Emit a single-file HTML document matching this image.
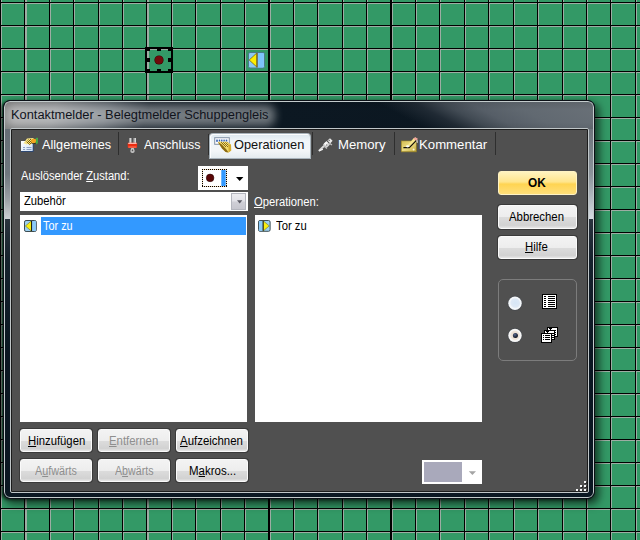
<!DOCTYPE html>
<html lang="de">
<head>
<meta charset="utf-8">
<title>Kontaktmelder - Belegtmelder Schuppengleis</title>
<style>
html,body{margin:0;padding:0;}
body{width:640px;height:540px;overflow:hidden;position:relative;background:#339966;font-family:"Liberation Sans",sans-serif;}
.grid{position:absolute;left:0;top:0;display:block;}
.abs{position:absolute;}
.tx{position:absolute;white-space:nowrap;line-height:1;transform-origin:0 50%;font-family:"Liberation Sans",sans-serif;}
.tx u{text-decoration:underline;text-underline-offset:1px;text-decoration-thickness:1px;}
/* selection cell */
#sel{left:145px;top:47px;width:24px;height:22px;border:2px solid #000;}
.h{position:absolute;background:#000;}
#dot{left:154.8px;top:55.8px;width:8.4px;height:8.4px;border-radius:50%;background:#6e0b0b;box-shadow:0 0 0 0.6px #300;}
/* dialog */
#dlg{left:3px;top:100px;width:592px;height:399px;border-radius:7px;box-sizing:border-box;border:1px solid #0b1016;
 box-shadow:3px 4px 8px 1px rgba(0,0,0,.62), -2px 1px 3px rgba(0,0,0,.55);background:#0b1722;overflow:hidden;}
#dlgin{left:0;top:0;right:0;bottom:0;border-radius:6px;border:1px solid #c3cbcc;box-sizing:border-box;}
#tbar{left:1px;top:1px;width:588px;height:27px;overflow:hidden;
 background:
  linear-gradient(to bottom, rgba(0,0,0,.10) 0%, rgba(0,0,0,0) 30%, rgba(0,0,0,0) 75%, rgba(0,0,0,.06) 100%),
  linear-gradient(28deg, rgba(12,24,34,0) 198px, #202a34 215px, #414a53 228px, #565e67 241px, #616971 260px, #6a7178 300px),
  linear-gradient(105deg,#8a8a8a 0px,#84878a 50px,#555d65 100px,#1c2630 140px,#0c1822 260px,#0b1620 100%);}
#glow{left:10px;top:11px;width:252px;height:5px;border-radius:6px;background:rgba(255,255,255,.40);box-shadow:0 0 8px 8px rgba(255,255,255,.40);}
#lstrip{left:1px;top:28px;width:5px;height:365px;background:linear-gradient(to bottom,#666e76 0px,#6f777e 45px,#9a9fa4 70px,#cdd0d3 90px,#2a343e 90px,#16222d 130px,#0b1722 220px,#0b1722 100%);}
#rstrip{left:585px;top:28px;width:5px;height:365px;background:linear-gradient(to bottom,#6c747b 0px,#8b939a 45px,#b4bbc2 70px,#d6dce2 90px,#2a343e 90px,#16222d 130px,#0b1722 220px,#0b1722 100%);}
#cli{left:6px;top:27px;width:579px;height:365px;border-radius:2px;border:1px solid #c0c6c8;box-sizing:border-box;background:#505050;}
#cli2{left:0;top:0;right:0;bottom:0;border-radius:1px;border:1px solid #1c1c1c;box-sizing:border-box;}
/* tabs */
.sep{position:absolute;width:1px;top:132px;height:23px;background:#2e2e2e;}
#tabsel{left:210px;top:134px;width:100px;height:23.5px;border-radius:3px 3px 0 0;background:linear-gradient(to bottom,#dbe7ef 0%,#f1f6f9 30%,#f3f6f8 70%,#e4ebef 100%);box-shadow:0 0 0 1px rgba(190,204,214,.8), inset 1px 1px 0 rgba(255,255,255,.9);}
/* inputs */
.white{position:absolute;background:#fff;}
.btn{position:absolute;box-sizing:border-box;border:1px solid #fafafa;border-radius:3px;background:linear-gradient(to bottom,#f3f3f3 0%,#ededed 50%,#dcdcdc 52%,#d2d2d2 88%,#e6e6e6 100%);box-shadow:0 0 0 1px rgba(40,40,40,.55);}
.btn.ok{border-color:#fff3c4;background:linear-gradient(to bottom,#fff3bf 0%,#ffe58c 45%,#ffd452 55%,#ffdf7a 100%);box-shadow:none;}
.bt{position:absolute;left:0;right:0;text-align:center;white-space:nowrap;line-height:1;color:#000;font-size:11.8px;}
.bt.dis{color:#8a8a8a;}
.bt u{text-underline-offset:1px;text-decoration-thickness:1px;}

</style>
</head>
<body>
<svg class="grid" width="640" height="540" viewBox="0 0 640 540" shape-rendering="crispEdges">
<rect width="640" height="540" fill="#339966"/>
<rect x="0" y="3" width="640" height="1" fill="#9dada3"/>
<rect x="0" y="26" width="640" height="1" fill="#9dada3"/>
<rect x="0" y="49" width="640" height="1" fill="#9dada3"/>
<rect x="0" y="72" width="640" height="1" fill="#9dada3"/>
<rect x="0" y="95" width="640" height="1" fill="#9dada3"/>
<rect x="0" y="118" width="640" height="1" fill="#9dada3"/>
<rect x="0" y="141" width="640" height="1" fill="#9dada3"/>
<rect x="0" y="164" width="640" height="1" fill="#9dada3"/>
<rect x="0" y="187" width="640" height="1" fill="#9dada3"/>
<rect x="0" y="210" width="640" height="1" fill="#9dada3"/>
<rect x="0" y="233" width="640" height="1" fill="#9dada3"/>
<rect x="0" y="256" width="640" height="1" fill="#9dada3"/>
<rect x="0" y="279" width="640" height="1" fill="#9dada3"/>
<rect x="0" y="302" width="640" height="1" fill="#9dada3"/>
<rect x="0" y="325" width="640" height="1" fill="#9dada3"/>
<rect x="0" y="348" width="640" height="1" fill="#9dada3"/>
<rect x="0" y="371" width="640" height="1" fill="#9dada3"/>
<rect x="0" y="394" width="640" height="1" fill="#9dada3"/>
<rect x="0" y="417" width="640" height="1" fill="#9dada3"/>
<rect x="0" y="440" width="640" height="1" fill="#9dada3"/>
<rect x="0" y="463" width="640" height="1" fill="#9dada3"/>
<rect x="0" y="486" width="640" height="1" fill="#9dada3"/>
<rect x="0" y="509" width="640" height="1" fill="#9dada3"/>
<rect x="0" y="532" width="640" height="1" fill="#9dada3"/>
<rect x="1" y="0" width="1" height="540" fill="#9dada3"/>
<rect x="25" y="0" width="2" height="540" fill="#9dada3"/>
<rect x="50" y="0" width="1" height="540" fill="#9dada3"/>
<rect x="74" y="0" width="1" height="540" fill="#9dada3"/>
<rect x="99" y="0" width="1" height="540" fill="#9dada3"/>
<rect x="123" y="0" width="1" height="540" fill="#9dada3"/>
<rect x="147" y="0" width="2" height="540" fill="#9dada3"/>
<rect x="172" y="0" width="1" height="540" fill="#9dada3"/>
<rect x="196" y="0" width="1" height="540" fill="#9dada3"/>
<rect x="221" y="0" width="1" height="540" fill="#9dada3"/>
<rect x="245" y="0" width="1" height="540" fill="#9dada3"/>
<rect x="270" y="0" width="1" height="540" fill="#9dada3"/>
<rect x="294" y="0" width="1" height="540" fill="#9dada3"/>
<rect x="318" y="0" width="1" height="540" fill="#9dada3"/>
<rect x="343" y="0" width="1" height="540" fill="#9dada3"/>
<rect x="367" y="0" width="1" height="540" fill="#9dada3"/>
<rect x="392" y="0" width="1" height="540" fill="#9dada3"/>
<rect x="416" y="0" width="1" height="540" fill="#9dada3"/>
<rect x="440" y="0" width="1" height="540" fill="#9dada3"/>
<rect x="465" y="0" width="1" height="540" fill="#9dada3"/>
<rect x="489" y="0" width="1" height="540" fill="#9dada3"/>
<rect x="514" y="0" width="1" height="540" fill="#9dada3"/>
<rect x="538" y="0" width="1" height="540" fill="#9dada3"/>
<rect x="563" y="0" width="1" height="540" fill="#9dada3"/>
<rect x="587" y="0" width="1" height="540" fill="#9dada3"/>
<rect x="611" y="0" width="1" height="540" fill="#9dada3"/>
<rect x="636" y="0" width="1" height="540" fill="#9dada3"/>
<rect x="660" y="0" width="1" height="540" fill="#9dada3"/>
<rect x="0" y="2" width="640" height="1" fill="#000"/>
<rect x="0" y="25" width="640" height="1" fill="#000"/>
<rect x="0" y="48" width="640" height="1" fill="#000"/>
<rect x="0" y="71" width="640" height="1" fill="#000"/>
<rect x="0" y="94" width="640" height="1" fill="#000"/>
<rect x="0" y="117" width="640" height="1" fill="#000"/>
<rect x="0" y="140" width="640" height="1" fill="#000"/>
<rect x="0" y="163" width="640" height="1" fill="#000"/>
<rect x="0" y="186" width="640" height="1" fill="#000"/>
<rect x="0" y="209" width="640" height="1" fill="#000"/>
<rect x="0" y="232" width="640" height="1" fill="#000"/>
<rect x="0" y="255" width="640" height="1" fill="#000"/>
<rect x="0" y="278" width="640" height="1" fill="#000"/>
<rect x="0" y="301" width="640" height="1" fill="#000"/>
<rect x="0" y="324" width="640" height="1" fill="#000"/>
<rect x="0" y="347" width="640" height="1" fill="#000"/>
<rect x="0" y="370" width="640" height="1" fill="#000"/>
<rect x="0" y="393" width="640" height="1" fill="#000"/>
<rect x="0" y="416" width="640" height="1" fill="#000"/>
<rect x="0" y="439" width="640" height="1" fill="#000"/>
<rect x="0" y="462" width="640" height="1" fill="#000"/>
<rect x="0" y="485" width="640" height="1" fill="#000"/>
<rect x="0" y="508" width="640" height="1" fill="#000"/>
<rect x="0" y="531" width="640" height="1" fill="#000"/>
<rect x="0" y="0" width="1" height="540" fill="#000"/>
<rect x="24" y="0" width="1" height="540" fill="#000"/>
<rect x="49" y="0" width="1" height="540" fill="#000"/>
<rect x="73" y="0" width="1" height="540" fill="#000"/>
<rect x="98" y="0" width="1" height="540" fill="#000"/>
<rect x="122" y="0" width="1" height="540" fill="#000"/>
<rect x="146" y="0" width="1" height="540" fill="#000"/>
<rect x="171" y="0" width="1" height="540" fill="#000"/>
<rect x="195" y="0" width="1" height="540" fill="#000"/>
<rect x="220" y="0" width="1" height="540" fill="#000"/>
<rect x="244" y="0" width="1" height="540" fill="#000"/>
<rect x="268" y="0" width="2" height="540" fill="#000"/>
<rect x="293" y="0" width="1" height="540" fill="#000"/>
<rect x="317" y="0" width="1" height="540" fill="#000"/>
<rect x="342" y="0" width="1" height="540" fill="#000"/>
<rect x="366" y="0" width="1" height="540" fill="#000"/>
<rect x="390" y="0" width="2" height="540" fill="#000"/>
<rect x="415" y="0" width="1" height="540" fill="#000"/>
<rect x="439" y="0" width="1" height="540" fill="#000"/>
<rect x="464" y="0" width="1" height="540" fill="#000"/>
<rect x="488" y="0" width="1" height="540" fill="#000"/>
<rect x="513" y="0" width="1" height="540" fill="#000"/>
<rect x="537" y="0" width="1" height="540" fill="#000"/>
<rect x="562" y="0" width="1" height="540" fill="#000"/>
<rect x="586" y="0" width="1" height="540" fill="#000"/>
<rect x="610" y="0" width="1" height="540" fill="#000"/>
<rect x="635" y="0" width="1" height="540" fill="#000"/>
<rect x="659" y="0" width="1" height="540" fill="#000"/>
</svg>
<!-- grid objects -->
<div id="sel" class="abs"></div>
<div class="h" style="left:147px;top:49px;width:3px;height:2px"></div>
<div class="h" style="left:157px;top:49px;width:4px;height:2px"></div>
<div class="h" style="left:168px;top:49px;width:3px;height:2px"></div>
<div class="h" style="left:147px;top:58px;width:3px;height:4px"></div>
<div class="h" style="left:168px;top:58px;width:3px;height:4px"></div>
<div class="h" style="left:147px;top:69px;width:3px;height:2px"></div>
<div class="h" style="left:157px;top:69px;width:4px;height:2px"></div>
<div class="h" style="left:168px;top:69px;width:3px;height:2px"></div>
<div id="dot" class="abs"></div>
<svg class="abs" style="left:248px;top:52px" width="17" height="17" viewBox="0 0 17 17">
 <rect x="0.5" y="0.5" width="16" height="15.5" rx="1.5" fill="#8cc8f4" stroke="#4a7a8a" stroke-width="1"/>
 <rect x="9.5" y="1" width="6" height="14.5" fill="#7cc4fc"/>
 <path d="M1.2 8 L8.8 1 L8.8 15 Z" fill="#ffee00" stroke="#7a6a10" stroke-width="0.8"/>
 <rect x="8.6" y="1" width="1" height="14.5" fill="#6a5a20"/>
</svg>

<!-- dialog -->
<div id="dlg" class="abs">
 <div id="tbar" class="abs"><div id="glow" class="abs"></div></div>
 <div id="lstrip" class="abs"></div>
 <div id="rstrip" class="abs"></div>
 <div id="dlgin" class="abs"></div>
 <div id="cli" class="abs"><div id="cli2" class="abs"></div></div>
</div>

<!-- tabs -->
<div class="sep" style="left:118px"></div>
<div class="sep" style="left:208px;top:134px;height:21px"></div>
<div id="tabsel" class="abs"></div>
<div class="sep" style="left:312px"></div>
<div class="sep" style="left:394px"></div>
<div class="sep" style="left:495px"></div>

<!-- state dropdown -->
<div class="white" style="left:198px;top:166px;width:50px;height:23.8px"></div>
<!-- combo -->
<div class="white" style="left:20.4px;top:191.7px;width:227.5px;height:19.3px"></div>
<!-- lists -->
<div class="white" style="left:20.4px;top:215.4px;width:227px;height:206.8px"></div>
<div class="white" style="left:254.5px;top:215.4px;width:227px;height:206.8px"></div>
<div class="abs" style="left:41px;top:217px;width:205px;height:18px;background:#3399ff"></div>

<!-- buttons -->
<div class="btn ok" style="left:498px;top:171px;width:79px;height:24px"></div>
<div class="btn" style="left:498px;top:205px;width:79px;height:23.5px"></div>
<div class="btn" style="left:498px;top:236.2px;width:79px;height:23.3px"></div>

<div class="btn" style="left:20.3px;top:429px;width:71.6px;height:23.3px"></div>
<div class="btn" style="left:98.3px;top:429px;width:71.6px;height:23.3px"></div>
<div class="btn" style="left:176.3px;top:429px;width:71.6px;height:23.3px"></div>
<div class="btn" style="left:20.3px;top:459px;width:71.6px;height:23.3px"></div>
<div class="btn" style="left:98.3px;top:459px;width:71.6px;height:23.3px"></div>
<div class="btn" style="left:176.3px;top:459px;width:71.6px;height:23.3px"></div>

<!-- group box -->
<div class="abs" style="left:498px;top:279px;width:79px;height:82px;box-sizing:border-box;border:1px solid #7c7c7c;border-radius:5px"></div>

<!-- color combo -->
<div class="white" style="left:422px;top:460px;width:60px;height:24px"></div>
<div class="abs" style="left:424px;top:462px;width:38px;height:20px;background:#a9a9bb"></div>

<!-- tab icon 1: Allgemeines -->
<svg class="abs" style="left:20px;top:137px" width="19" height="16" viewBox="0 0 19 16">
 <defs><linearGradient id="g1" x1="0" y1="0" x2="1" y2="1"><stop offset="0" stop-color="#ffffff"/><stop offset="1" stop-color="#cfe0f6"/></linearGradient>
 <pattern id="chk" width="2" height="2" patternUnits="userSpaceOnUse"><rect width="2" height="2" fill="#f8e680"/><rect width="1" height="1" fill="#7a5c0c"/><rect x="1" y="1" width="1" height="1" fill="#7a5c0c"/></pattern></defs>
 <rect x="1" y="4" width="12.6" height="10.8" fill="#27477c"/>
 <rect x="1" y="4" width="11.7" height="10" fill="url(#g1)"/>
 <rect x="3" y="10" width="2" height="1" fill="#8da0c4"/><rect x="6.5" y="10" width="5" height="1" fill="#8da0c4"/>
 <rect x="3" y="12" width="2" height="1" fill="#8da0c4"/><rect x="6.5" y="12" width="5" height="1" fill="#8da0c4"/>
 <path d="M3.4 6.4 L7 1.6 L13 1 L15 3 L13.4 6.4 L11.4 6.4 L10 8.4 L8 6.8 L6.4 7.6 L5 6.4 Z" fill="#f4e184"/>
 <path d="M6 5 L9 2 L13 2 L13 6 L11 6.4 L10 8 L8 6.4 Z" fill="url(#chk)"/>
 <ellipse cx="13.8" cy="3.9" rx="2.7" ry="2.2" fill="#f2a41e"/>
 <path d="M11.2 5.8 Q13.8 7.2 16 5.6 L15.6 6.6 Q13.6 7.6 11.6 6.6 Z" fill="#2e2006"/>
 <path d="M15.6 1 L18 0.8 L18 6 L16.6 7.4 L15.6 5.8 Q17 3.6 15.6 1 Z" fill="#47a847"/>
</svg>
<!-- tab icon 2: Anschluss -->
<svg class="abs" style="left:126px;top:137px" width="13" height="17" viewBox="0 0 13 17">
 <rect x="3.2" y="1" width="2.2" height="5" fill="#e6e6e6"/><rect x="3.2" y="1" width="1" height="5" fill="#9a9a9a"/>
 <rect x="7.7" y="1" width="2.2" height="5" fill="#e6e6e6"/><rect x="7.7" y="1" width="1" height="5" fill="#9a9a9a"/>
 <rect x="1.7" y="5.7" width="9.4" height="5.2" rx="0.8" fill="#ee2c10"/>
 <rect x="2.2" y="5.8" width="8.4" height="1" fill="#ffd8d0"/>
 <rect x="2.4" y="9.6" width="8" height="0.9" fill="#ff9a88" opacity=".85"/>
 <path d="M5.3 11 L7.7 11 L8.7 14 Q8.6 16 6.5 16 Q4.4 16 4.3 14 Z" fill="#c8c8c8"/>
 <path d="M6 12.4 L7 12.4 L7.4 14.2 L5.6 14.2 Z" fill="#585858"/>
</svg>
<!-- tab icon 3: Operationen -->
<svg class="abs" style="left:213px;top:136px" width="19" height="17" viewBox="0 0 19 17">
 <defs><pattern id="chk3" width="2" height="2" patternUnits="userSpaceOnUse"><rect width="2" height="2" fill="#f6e27a"/><rect width="1" height="1" fill="#8a6a14"/><rect x="1" y="1" width="1" height="1" fill="#8a6a14"/></pattern></defs>
 <rect x="1.7" y="1.7" width="14.6" height="6.6" fill="#fdfdff" stroke="#8292a6" stroke-width="1"/>
 <g fill="#2c5cb0"><rect x="3.2" y="3.6" width="1.6" height="2.2"/><rect x="5.8" y="3.6" width="1.4" height="2"/><rect x="8.1" y="3.6" width="1.4" height="2"/><rect x="10.4" y="3.6" width="1.4" height="2"/><rect x="12.7" y="3.6" width="1.6" height="2"/></g>
 <path d="M4.8 6 L7.6 5.4 L10 6 L12.4 5.4 L15 6.2 L18 8.6 L18.2 14.6 L15.6 16.4 L12.6 16 L9 12.4 Z" fill="#f0d868"/>
 <path d="M7 6 L15 6.4 L16 11 L12 11 Z" fill="url(#chk3)"/>
 <path d="M4.8 6 L9 12.4 L12.6 16 L15.6 16.4 L13.4 13.6 L8.8 8.6 Z" fill="#8a6a14"/>
 <path d="M15.4 8.4 L18 8.6 L18.2 14.6 L15.6 16.4 Z" fill="#d4ab30"/>
</svg>
<!-- tab icon 4: Memory -->
<svg class="abs" style="left:318px;top:137px" width="16" height="15" viewBox="0 0 16 15">
 <path d="M1.4 13.4 L6 9" stroke="#d8d8d8" stroke-width="2" stroke-linecap="round"/>
 <path d="M1.6 13.6 L4.4 12.4" stroke="#f4f4f4" stroke-width="1.4" stroke-linecap="round"/>
 <path d="M5 7.4 L8.4 4 L12 7.6 L8.6 11 Z" fill="#d4d4d4"/>
 <path d="M6 6.6 L8.4 4.4 L10 6 L7.6 8.4 Z" fill="#f8f8f8"/>
 <path d="M9.4 3.6 L12 1.2 L14.6 3.8 L12.2 6.4 Z" fill="#e9e9e9"/>
 <path d="M11.4 6.2 L14 8" stroke="#c4c4c4" stroke-width="1.2"/>
 <path d="M6.6 9.8 L9 11.6" stroke="#bcbcbc" stroke-width="1.1"/>
 <rect x="10.6" y="2.8" width="1.2" height="1.2" fill="#707070"/><rect x="8" y="7.4" width="1.2" height="1.2" fill="#8a8a8a"/>
</svg>
<!-- tab icon 5: Kommentar -->
<svg class="abs" style="left:400px;top:137px" width="18" height="17" viewBox="0 0 18 17">
 <defs><linearGradient id="g5" x1="0" y1="0" x2="1" y2="1"><stop offset="0" stop-color="#d4be54"/><stop offset=".5" stop-color="#ecdc84"/><stop offset="1" stop-color="#c4ac40"/></linearGradient></defs>
 <rect x="1" y="3.6" width="15.8" height="11.6" fill="#94802a"/>
 <rect x="1.7" y="4.2" width="14.2" height="10.1" fill="url(#g5)"/>
 <path d="M6.6 9.4 L13.6 1.2 L15.4 0.4 L17.3 1.8 L16.6 3.8 L9.4 11 L6.8 11 Z" fill="#f6e68c"/>
 <path d="M13.4 1.4 L15.2 0.2 L17.6 1.4 L17.2 3.4 L16.2 4.2 Z" fill="#f0a49c"/>
 <path d="M3.4 10.7 L9.3 10.7 L16.4 3.4" stroke="#120e06" stroke-width="1.2" fill="none"/>
 <ellipse cx="7.6" cy="9.3" rx="1.7" ry="1.1" fill="#fcfcf6"/>
 <circle cx="13.6" cy="12.6" r="1" fill="#fbf6e0"/>
 <path d="M17 3.2 L17.2 5.8" stroke="#fff" stroke-width="1"/>
</svg>

<!-- state dropdown content -->
<svg class="abs" style="left:198px;top:166px" width="50" height="24" viewBox="0 0 50 24">
 <rect x="4" y="3" width="25" height="18" fill="#f6dcb8"/><rect x="5" y="4" width="23" height="16" fill="#fff"/>
 <g shape-rendering="crispEdges" stroke="#000" stroke-width="1" stroke-dasharray="1 1" fill="none"><path d="M4 3.5 H29"/><path d="M4 20.5 H29"/><path d="M4.5 3 V21"/><path d="M28.5 3 V21"/></g>
 <rect x="23.3" y="4" width="4.4" height="16" fill="#3399ff"/>
 <circle cx="12.1" cy="11.9" r="3.8" fill="#5a0606" stroke="#2a0303" stroke-width=".6"/>
 <path d="M38 11 L45.4 11 L41.7 15 Z" fill="#000"/>
</svg>
<!-- combo dropdown button -->
<div class="abs" style="left:231px;top:193px;width:15px;height:17px;box-sizing:border-box;border:1px solid #b4b6be;background:linear-gradient(to bottom,#ececf0 0%,#e2e2e8 45%,#cfcfd6 55%,#c6c6ce 100%)"></div>
<svg class="abs" style="left:236px;top:199px" width="8" height="6" viewBox="0 0 8 6"><path d="M1 1.2 L6.4 1.2 L3.7 4.4 Z" fill="#5c5c66"/></svg>
<!-- list icon left -->
<svg class="abs" style="left:24.2px;top:220px" width="12.8" height="12" viewBox="0 0 13 12" preserveAspectRatio="none">
 <rect x="0.5" y="0.5" width="12" height="11" rx="1.6" fill="#9dd0f0" stroke="#3a4a50" stroke-width="1"/>
 <rect x="8" y="1" width="4" height="10" fill="#8ccaf8"/>
 <path d="M1.4 6 L7.6 0.8 L7.6 11.2 Z" fill="#f8ee10" stroke="#5a5a20" stroke-width=".5"/>
 <rect x="7.2" y="1" width="1" height="10" fill="#1a1a10"/>
</svg>
<!-- list icon right -->
<svg class="abs" style="left:258.3px;top:220px" width="12.6" height="11.8" viewBox="0 0 13 12" preserveAspectRatio="none">
 <rect x="0.5" y="0.5" width="12" height="11" rx="1.6" fill="#9dd0f0" stroke="#3a4a50" stroke-width="1"/>
 <rect x="1" y="1" width="4" height="10" fill="#8ccaf8"/>
 <path d="M11.6 6 L5.4 0.8 L5.4 11.2 Z" fill="#f8ee10" stroke="#5a5a20" stroke-width=".5"/>
 <rect x="4.8" y="1" width="1" height="10" fill="#1a1a10"/>
</svg>
<!-- radios -->
<svg class="abs" style="left:506px;top:294px" width="18" height="18" viewBox="0 0 18 18">
 <defs><radialGradient id="r1" cx=".55" cy=".45" r=".6"><stop offset="0" stop-color="#d6e6f6"/><stop offset=".7" stop-color="#dfe9f5"/><stop offset="1" stop-color="#f6f9fc"/></radialGradient></defs>
 <circle cx="9" cy="9.3" r="7.5" fill="#3f464c" opacity=".55"/>
 <circle cx="9" cy="9.3" r="6.7" fill="#f4f7fa"/>
 <circle cx="9" cy="9.3" r="5.1" fill="url(#r1)"/>
</svg>
<svg class="abs" style="left:506px;top:326px" width="18" height="18" viewBox="0 0 18 18">
 <defs><radialGradient id="r2" cx=".5" cy=".5" r=".55"><stop offset="0" stop-color="#e8d6c8"/><stop offset=".75" stop-color="#f0e4da"/><stop offset="1" stop-color="#faf8f6"/></radialGradient>
 <radialGradient id="r3" cx=".4" cy=".35" r=".7"><stop offset="0" stop-color="#5a6a90"/><stop offset="1" stop-color="#0a0c18"/></radialGradient></defs>
 <circle cx="9" cy="9.4" r="7.5" fill="#3f464c" opacity=".55"/>
 <circle cx="9" cy="9.4" r="6.7" fill="#f6f6f6"/>
 <circle cx="9" cy="9.4" r="5.1" fill="url(#r2)"/>
 <circle cx="9.4" cy="9.4" r="2.5" fill="url(#r3)"/>
</svg>
<!-- group icon 1: list -->
<svg class="abs" style="left:542px;top:294px" width="15" height="15" viewBox="0 0 15 15" shape-rendering="crispEdges">
 <rect x="0" y="0" width="15" height="15" fill="#000"/><rect x="1" y="1" width="13" height="13" fill="#fff"/>
 <g fill="#000"><rect x="2" y="2" width="2" height="1"/><rect x="6" y="2" width="7" height="1"/>
 <rect x="2" y="4" width="2" height="1"/><rect x="6" y="4" width="7" height="1"/>
 <rect x="2" y="6" width="2" height="1"/><rect x="6" y="6" width="7" height="1"/>
 <rect x="2" y="8" width="2" height="1"/><rect x="6" y="8" width="7" height="1"/>
 <rect x="2" y="10" width="2" height="1"/><rect x="6" y="10" width="7" height="1"/>
 <rect x="2" y="12" width="2" height="1"/><rect x="6" y="12" width="7" height="1"/></g>
</svg>
<!-- group icon 2: stacked pages -->
<svg class="abs" style="left:541px;top:327px" width="17" height="16" viewBox="0 0 17 16" shape-rendering="crispEdges">
 <rect x="6" y="0" width="11" height="10" fill="#000"/><rect x="7" y="1" width="9" height="8" fill="#fff"/>
 <rect x="8" y="1" width="3" height="1" fill="#000"/><rect x="9" y="2" width="1" height="1" fill="#000"/>
 <rect x="13" y="3" width="2" height="1" fill="#000"/><rect x="13" y="5" width="2" height="1" fill="#000"/><rect x="13" y="7" width="2" height="1" fill="#000"/>
 <rect x="3" y="3" width="11" height="10" fill="#000"/><rect x="4" y="4" width="9" height="8" fill="#fff"/>
 <rect x="5" y="4" width="3" height="1" fill="#000"/><rect x="6" y="5" width="1" height="1" fill="#000"/>
 <rect x="11" y="6" width="2" height="1" fill="#000"/><rect x="11" y="8" width="2" height="1" fill="#000"/><rect x="11" y="10" width="2" height="1" fill="#000"/>
 <rect x="0" y="6" width="11" height="10" fill="#000"/><rect x="1" y="7" width="9" height="8" fill="#fff"/>
 <g fill="#000"><rect x="2" y="8" width="1" height="1"/><rect x="4" y="8" width="5" height="1"/>
 <rect x="2" y="10" width="1" height="1"/><rect x="4" y="10" width="5" height="1"/>
 <rect x="2" y="12" width="1" height="1"/><rect x="4" y="12" width="5" height="1"/></g>
</svg>
<!-- color combo triangle -->
<svg class="abs" style="left:468px;top:470px" width="9" height="6" viewBox="0 0 9 6"><path d="M0.8 1.2 L8 1.2 L4.4 5 Z" fill="#a4a4a4"/></svg>
<!-- size grip -->
<svg class="abs" style="left:575px;top:479px" width="13" height="13" viewBox="0 0 13 13" shape-rendering="crispEdges">
 <g fill="#2a2a2a"><rect x="10" y="3" width="2" height="2"/><rect x="6" y="7" width="2" height="2"/><rect x="10" y="7" width="2" height="2"/><rect x="2" y="11" width="2" height="2"/><rect x="6" y="11" width="2" height="2"/><rect x="10" y="11" width="2" height="2"/></g>
 <g fill="#f6f6f6"><rect x="9" y="2" width="2" height="2"/><rect x="5" y="6" width="2" height="2"/><rect x="9" y="6" width="2" height="2"/><rect x="1" y="10" width="2" height="2"/><rect x="5" y="10" width="2" height="2"/><rect x="9" y="10" width="2" height="2"/></g>
</svg>

<span id="t_title" class="tx" style="left:11.43px;top:109.00px;font-size:12px;color:#10131c;transform:scaleX(1.0690);">Kontaktmelder - Belegtmelder Schuppengleis</span>
<span id="t_tab1" class="tx" style="left:41.50px;top:139.00px;font-size:12.6px;color:#ffffff;transform:scaleX(1.0074);">Allgemeines</span>
<span id="t_tab2" class="tx" style="left:144.00px;top:139.00px;font-size:12.6px;color:#ffffff;transform:scaleX(0.9825);">Anschluss</span>
<span id="t_tab3" class="tx" style="left:233.99px;top:139.00px;font-size:12.6px;color:#101010;transform:scaleX(1.0147);">Operationen</span>
<span id="t_tab4" class="tx" style="left:337.96px;top:139.00px;font-size:12.6px;color:#ffffff;transform:scaleX(1.0444);">Memory</span>
<span id="t_tab5" class="tx" style="left:418.95px;top:139.00px;font-size:12.6px;color:#ffffff;transform:scaleX(1.0469);">Kommentar</span>
<span id="t_lab1" class="tx" style="left:20.50px;top:170.00px;font-size:12px;color:#ffffff;transform:scaleX(0.9302);">Auslösender <u>Z</u>ustand:</span>
<span id="t_combo" class="tx" style="left:24.00px;top:195.00px;font-size:12px;color:#000000;transform:scaleX(0.9333);">Zubehör</span>
<span id="t_lab2" class="tx" style="left:254.00px;top:196.00px;font-size:12px;color:#ffffff;transform:scaleX(0.9353);"><u>O</u>perationen:</span>
<span id="t_li1" class="tx" style="left:43.00px;top:220.00px;font-size:12px;color:#ffffff;transform:scaleX(0.9062);">Tor zu</span>
<span id="t_li2" class="tx" style="left:276.00px;top:220.00px;font-size:12px;color:#000000;transform:scaleX(0.9375);">Tor zu</span>
<span id="t_ok" class="tx" style="left:528.30px;top:177.00px;font-size:12.5px;color:#000000;transform:scaleX(0.9474);font-weight:bold;">OK</span>
<span id="t_abb" class="tx" style="left:509.20px;top:211.00px;font-size:12px;color:#000000;transform:scaleX(0.9474);">Abbrechen</span>
<span id="t_hil" class="tx" style="left:525.45px;top:241.00px;font-size:12px;color:#000000;transform:scaleX(0.9478);"><u>H</u>ilfe</span>
<span id="t_hin" class="tx" style="left:27.56px;top:435.00px;font-size:12px;color:#000000;transform:scaleX(0.9424);"><u>H</u>inzufügen</span>
<span id="t_ent" class="tx" style="left:108.65px;top:435.00px;font-size:12px;color:#8e8e8e;transform:scaleX(0.9460);"><u>E</u>ntfernen</span>
<span id="t_auf" class="tx" style="left:180.10px;top:435.00px;font-size:12px;color:#000000;transform:scaleX(0.9523);"><u>A</u>ufzeichnen</span>
<span id="t_aufw" class="tx" style="left:34.75px;top:465.00px;font-size:12px;color:#8e8e8e;transform:scaleX(0.8967);">A<u>u</u>fwärts</span>
<span id="t_abw" class="tx" style="left:114.60px;top:465.00px;font-size:12px;color:#8e8e8e;transform:scaleX(0.8872);">A<u>b</u>wärts</span>
<span id="t_mak" class="tx" style="left:188.54px;top:465.00px;font-size:12px;color:#000000;transform:scaleX(0.9574);">M<u>a</u>kros...</span>

</body>
</html>
